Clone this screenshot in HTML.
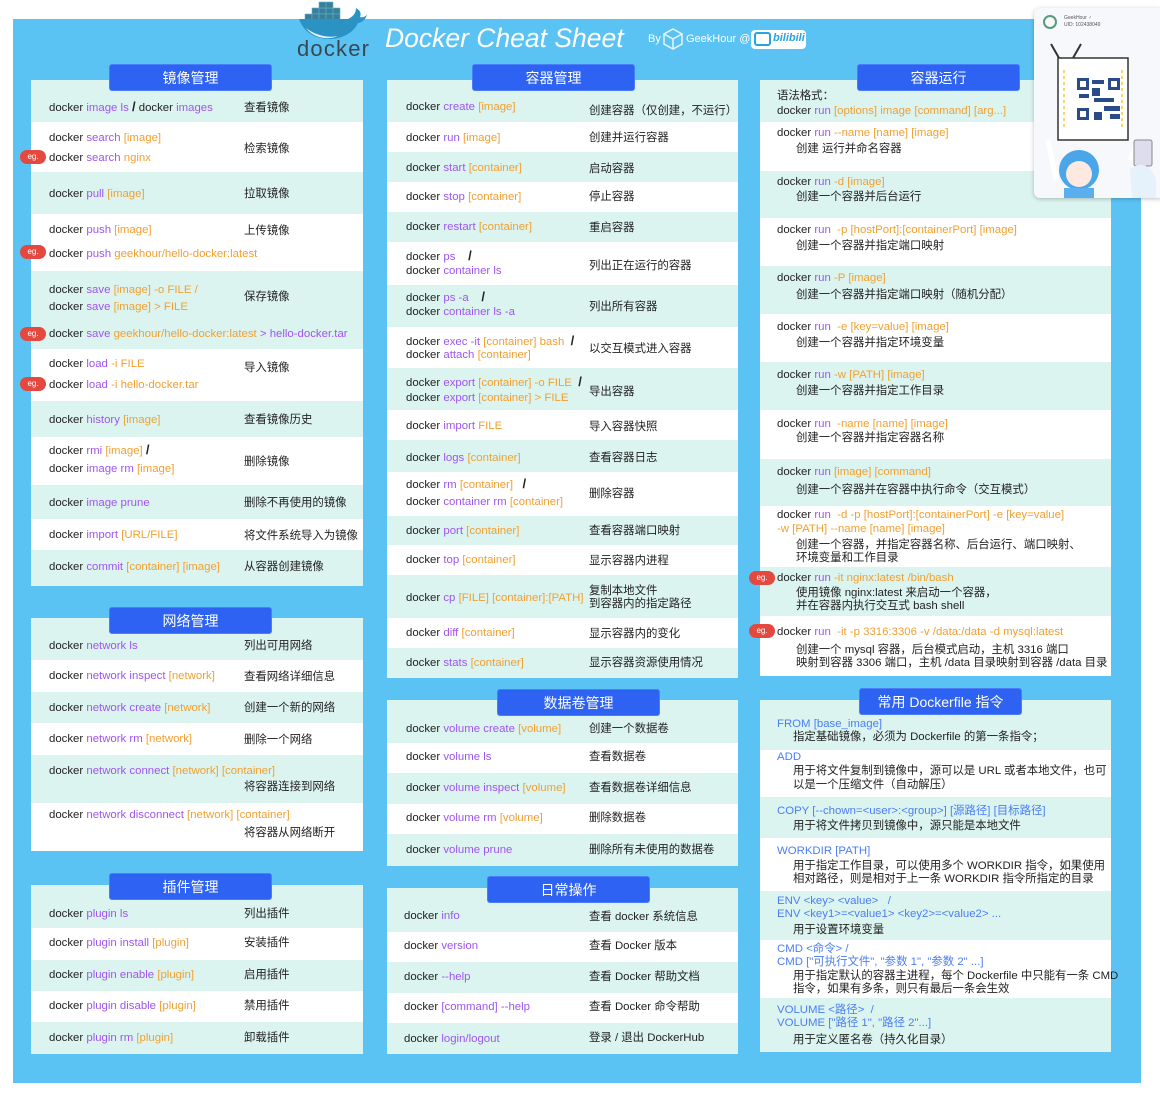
<!DOCTYPE html>
<html><head><meta charset="utf-8">
<style>
*{margin:0;padding:0;box-sizing:border-box}
body{width:1160px;height:1097px;background:#fff;position:relative;overflow:hidden;font-family:"Liberation Sans","Noto Sans CJK SC",sans-serif;color:#222}
.a{position:absolute}
#bg{left:13px;top:19px;width:1128px;height:1064px;background:#5bc3f4}
.r{position:absolute;background:#dcf4ef}
.w{background:#fff}
.t{position:absolute;font-size:11.4px;line-height:14px;white-space:nowrap;color:#222}
.p{color:#a054f0}.o{color:#f0a030}.b{color:#4a7ef5}
.pill{position:absolute;height:27px;background:#2d62f2;border-radius:3px;color:#fff;font-size:14px;line-height:27px;text-align:center;border:1px solid #4a7ef8}
.eg{position:absolute;width:26px;height:14px;background:#e4493f;color:#fff;border-radius:7px;font-size:8px;line-height:14px;text-align:center}
.sl{font-weight:bold;font-size:13px}
#card{z-index:5}
</style></head><body>
<div id="bg" class="a"></div>

<!-- header -->
<svg class="a" style="left:296px;top:0" width="76" height="60" viewBox="0 0 76 60">
<g fill="#3a7f9a" stroke="#5ab2cf" stroke-width=".6">
<rect x="16" y="8" width="7" height="6"/><rect x="23" y="8" width="7" height="6"/><rect x="30" y="8" width="7" height="6"/><rect x="37" y="8" width="7" height="6"/>
<rect x="23" y="2" width="7" height="6"/><rect x="30" y="2" width="7" height="6"/>
<rect x="9" y="14" width="7" height="6"/><rect x="16" y="14" width="7" height="6"/><rect x="23" y="14" width="7" height="6"/><rect x="30" y="14" width="7" height="6"/><rect x="37" y="14" width="7" height="6"/>
</g>
<path d="M3 19 H52 C56 17 60 14 60 8 C63 10 66 12 64 17 C68 18 70 16 71 14 C70 20 65 23 62 23 C57 34 44 39 34 39 C20 39 8 33 3 19Z" fill="#2b93c4"/>
<path d="M10 28 C20 36 34 38 42 36 C34 40 18 39 10 28Z" fill="#dff2fa"/>
<text x="1" y="56" font-family="Liberation Sans,sans-serif" font-size="22" fill="#39484f" textLength="72">docker</text>
</svg>
<div class="a" style="left:385px;top:21px;color:#fff;font-size:26.5px;font-style:italic;line-height:34px;white-space:nowrap">Docker Cheat Sheet</div>
<div class="a" style="left:648px;top:33px;color:#fff;font-size:11px">By</div>
<svg class="a" style="left:662px;top:28px" width="22" height="22" viewBox="0 0 22 22"><path d="M11 1 L20 6 V16 L11 21 L2 16 V6Z M2 6 L11 11 L20 6 M11 11 V21" fill="none" stroke="#e6f6ff" stroke-width="1.5"/></svg>
<div class="a" style="left:686px;top:33px;color:#fff;font-size:11px">GeekHour @</div>
<div class="a" style="left:751px;top:30px;width:55px;height:19px;background:#fff;border-radius:4px"></div>
<div class="a" style="left:754px;top:32px;width:17px;height:14px;border:2.5px solid #2aa4dd;border-radius:3px"></div>
<div class="a" style="left:773px;top:32px;font-size:11px;font-weight:bold;color:#2aa4dd;font-style:italic;width:32px;overflow:hidden">bilibili</div>

<!-- QR card -->
<div id="card" class="a" style="left:1034px;top:8px;width:130px;height:190px;background:#f7f8fb;border-radius:6px;box-shadow:0 1px 4px rgba(0,0,0,.25)">
<div class="a" style="left:9px;top:7px;width:14px;height:14px;border-radius:7px;border:2px solid #5a9a7a"></div>
<div class="a" style="left:30px;top:7px;font-size:5px;color:#555;line-height:7px">GeekHour ♂<br>UID: 102438049</div>
<svg class="a" style="left:0;top:32px" width="126" height="158" viewBox="0 0 126 158">
<path d="M17 4 L25 18 M47 4 L39 18" stroke="#333" stroke-width="2"/>
<rect x="24" y="18" width="70" height="82" fill="#fff" stroke="#333" stroke-width="1.5"/>
<g fill="#2b4a8a">
<rect x="43" y="38" width="12" height="12"/><rect x="74" y="38" width="12" height="12"/><rect x="43" y="68" width="12" height="12"/>
<rect x="58" y="40" width="12" height="4"/><rect x="58" y="48" width="8" height="8"/><rect x="60" y="58" width="20" height="4"/><rect x="45" y="54" width="10" height="4"/><rect x="70" y="66" width="16" height="5"/><rect x="60" y="72" width="8" height="8"/><rect x="76" y="74" width="10" height="5"/>
</g>
<g fill="#fff"><rect x="46" y="41" width="6" height="6"/><rect x="77" y="41" width="6" height="6"/><rect x="46" y="71" width="6" height="6"/></g>
<path d="M30 30 V88 M88 30 V88" stroke="#f2c84a" stroke-width="1.5" stroke-dasharray="3 3"/>
<path d="M14 100 L22 140 M104 100 L96 120" stroke="#fff" stroke-width="5"/>
<circle cx="45" cy="130" r="20" fill="#4aa6e8"/>
<circle cx="45" cy="134" r="13" fill="#fde9df"/>
<rect x="30" y="148" width="30" height="10" fill="#5ab0ee"/>
<rect x="100" y="100" width="18" height="26" rx="2" fill="#dde" stroke="#888"/>
<path d="M96 130 C106 120 118 125 122 140 L122 158 L98 158Z" fill="#e5f2fb"/>
</svg>
</div>

<!-- ======== 镜像管理 ======== -->
<div class="r" style="left:31px;top:80px;width:332px;height:42px"></div>
<div class="r w" style="left:31px;top:122px;width:332px;height:50px"></div>
<div class="r" style="left:31px;top:172px;width:332px;height:42px"></div>
<div class="r w" style="left:31px;top:214px;width:332px;height:57px"></div>
<div class="r" style="left:31px;top:271px;width:332px;height:78px"></div>
<div class="r w" style="left:31px;top:349px;width:332px;height:52px"></div>
<div class="r" style="left:31px;top:401px;width:332px;height:36px"></div>
<div class="r w" style="left:31px;top:437px;width:332px;height:48px"></div>
<div class="r" style="left:31px;top:485px;width:332px;height:34px"></div>
<div class="r w" style="left:31px;top:519px;width:332px;height:31px"></div>
<div class="r" style="left:31px;top:550px;width:332px;height:36px"></div>
<div class="pill" style="left:109px;top:64px;width:163px">镜像管理</div>
<div class="t" style="left:49px;top:100px">docker <span class="p">image ls</span> <span class="sl">/</span> docker <span class="p">images</span></div>
<div class="t" style="left:244px;top:101px">查看镜像</div>
<div class="t" style="left:49px;top:131px">docker <span class="p">search</span> <span class="o">[image]</span></div>
<div class="t" style="left:244px;top:142px">检索镜像</div>
<div class="eg" style="left:20px;top:150px">eg.</div>
<div class="t" style="left:49px;top:151px">docker <span class="p">search</span> <span class="o">nginx</span></div>
<div class="t" style="left:49px;top:187px">docker <span class="p">pull</span> <span class="o">[image]</span></div>
<div class="t" style="left:244px;top:187px">拉取镜像</div>
<div class="t" style="left:49px;top:223px">docker <span class="p">push</span> <span class="o">[image]</span></div>
<div class="t" style="left:244px;top:224px">上传镜像</div>
<div class="eg" style="left:20px;top:245px">eg.</div>
<div class="t" style="left:49px;top:247px">docker <span class="p">push</span> <span class="o">geekhour/hello-docker:latest</span></div>
<div class="t" style="left:49px;top:283px">docker <span class="p">save</span> <span class="o">[image] -o FILE /</span></div>
<div class="t" style="left:244px;top:290px">保存镜像</div>
<div class="t" style="left:49px;top:300px">docker <span class="p">save</span> <span class="o">[image] &gt; FILE</span></div>
<div class="eg" style="left:20px;top:327px">eg.</div>
<div class="t" style="left:49px;top:327px">docker <span class="p">save</span> <span class="o">geekhour/hello-docker:latest</span> <span class="p">&gt; hello-docker.tar</span></div>
<div class="t" style="left:49px;top:357px">docker <span class="p">load</span> <span class="o">-i FILE</span></div>
<div class="t" style="left:244px;top:361px">导入镜像</div>
<div class="eg" style="left:20px;top:377px">eg.</div>
<div class="t" style="left:49px;top:378px">docker <span class="p">load</span> <span class="o">-i hello-docker.tar</span></div>
<div class="t" style="left:49px;top:413px">docker <span class="p">history</span> <span class="o">[image]</span></div>
<div class="t" style="left:244px;top:413px">查看镜像历史</div>
<div class="t" style="left:49px;top:443px">docker <span class="p">rmi</span> <span class="o">[image]</span> <span class="sl">/</span></div>
<div class="t" style="left:244px;top:455px">删除镜像</div>
<div class="t" style="left:49px;top:462px">docker <span class="p">image rm</span> <span class="o">[image]</span></div>
<div class="t" style="left:49px;top:496px">docker <span class="p">image prune</span></div>
<div class="t" style="left:244px;top:496px">删除不再使用的镜像</div>
<div class="t" style="left:49px;top:528px">docker <span class="p">import</span> <span class="o">[URL/FILE]</span></div>
<div class="t" style="left:244px;top:529px">将文件系统导入为镜像</div>
<div class="t" style="left:49px;top:560px">docker <span class="p">commit</span> <span class="o">[container] [image]</span></div>
<div class="t" style="left:244px;top:560px">从容器创建镜像</div>

<!-- ======== 网络管理 ======== -->
<div class="r" style="left:31px;top:618px;width:332px;height:42px"></div>
<div class="r w" style="left:31px;top:660px;width:332px;height:32px"></div>
<div class="r" style="left:31px;top:692px;width:332px;height:31px"></div>
<div class="r w" style="left:31px;top:723px;width:332px;height:32px"></div>
<div class="r" style="left:31px;top:755px;width:332px;height:48px"></div>
<div class="r w" style="left:31px;top:803px;width:332px;height:48px"></div>
<div class="pill" style="left:109px;top:607px;width:163px">网络管理</div>
<div class="t" style="left:49px;top:639px">docker <span class="p">network ls</span></div>
<div class="t" style="left:244px;top:639px">列出可用网络</div>
<div class="t" style="left:49px;top:669px">docker <span class="p">network inspect</span> <span class="o">[network]</span></div>
<div class="t" style="left:244px;top:670px">查看网络详细信息</div>
<div class="t" style="left:49px;top:701px">docker <span class="p">network create</span> <span class="o">[network]</span></div>
<div class="t" style="left:244px;top:701px">创建一个新的网络</div>
<div class="t" style="left:49px;top:732px">docker <span class="p">network rm</span> <span class="o">[network]</span></div>
<div class="t" style="left:244px;top:733px">删除一个网络</div>
<div class="t" style="left:49px;top:764px">docker <span class="p">network connect</span> <span class="o">[network] [container]</span></div>
<div class="t" style="left:244px;top:780px">将容器连接到网络</div>
<div class="t" style="left:49px;top:808px">docker <span class="p">network disconnect</span> <span class="o">[network] [container]</span></div>
<div class="t" style="left:244px;top:826px">将容器从网络断开</div>

<!-- ======== 插件管理 ======== -->
<div class="r" style="left:31px;top:885px;width:332px;height:43px"></div>
<div class="r w" style="left:31px;top:928px;width:332px;height:32px"></div>
<div class="r" style="left:31px;top:960px;width:332px;height:31px"></div>
<div class="r w" style="left:31px;top:991px;width:332px;height:31px"></div>
<div class="r" style="left:31px;top:1022px;width:332px;height:32px"></div>
<div class="pill" style="left:109px;top:873px;width:163px">插件管理</div>
<div class="t" style="left:49px;top:907px">docker <span class="p">plugin ls</span></div>
<div class="t" style="left:244px;top:907px">列出插件</div>
<div class="t" style="left:49px;top:936px">docker <span class="p">plugin install</span> <span class="o">[plugin]</span></div>
<div class="t" style="left:244px;top:936px">安装插件</div>
<div class="t" style="left:49px;top:968px">docker <span class="p">plugin enable</span> <span class="o">[plugin]</span></div>
<div class="t" style="left:244px;top:968px">启用插件</div>
<div class="t" style="left:49px;top:999px">docker <span class="p">plugin disable</span> <span class="o">[plugin]</span></div>
<div class="t" style="left:244px;top:999px">禁用插件</div>
<div class="t" style="left:49px;top:1031px">docker <span class="p">plugin rm</span> <span class="o">[plugin]</span></div>
<div class="t" style="left:244px;top:1031px">卸载插件</div>

<!-- ======== 容器管理 ======== -->
<div class="r" style="left:387px;top:80px;width:351px;height:42px"></div>
<div class="r w" style="left:387px;top:122px;width:351px;height:30px"></div>
<div class="r" style="left:387px;top:152px;width:351px;height:30px"></div>
<div class="r w" style="left:387px;top:182px;width:351px;height:30px"></div>
<div class="r" style="left:387px;top:212px;width:351px;height:30px"></div>
<div class="r w" style="left:387px;top:242px;width:351px;height:43px"></div>
<div class="r" style="left:387px;top:285px;width:351px;height:42px"></div>
<div class="r w" style="left:387px;top:327px;width:351px;height:41px"></div>
<div class="r" style="left:387px;top:368px;width:351px;height:42px"></div>
<div class="r w" style="left:387px;top:410px;width:351px;height:30px"></div>
<div class="r" style="left:387px;top:440px;width:351px;height:32px"></div>
<div class="r w" style="left:387px;top:472px;width:351px;height:44px"></div>
<div class="r" style="left:387px;top:516px;width:351px;height:29px"></div>
<div class="r w" style="left:387px;top:545px;width:351px;height:30px"></div>
<div class="r" style="left:387px;top:575px;width:351px;height:43px"></div>
<div class="r w" style="left:387px;top:618px;width:351px;height:30px"></div>
<div class="r" style="left:387px;top:648px;width:351px;height:30px"></div>
<div class="pill" style="left:472px;top:64px;width:163px">容器管理</div>
<div class="t" style="left:406px;top:100px">docker <span class="p">create</span> <span class="o">[image]</span></div>
<div class="t" style="left:589px;top:104px">创建容器（仅创建，不运行）</div>
<div class="t" style="left:406px;top:131px">docker <span class="p">run</span> <span class="o">[image]</span></div>
<div class="t" style="left:589px;top:131px">创建并运行容器</div>
<div class="t" style="left:406px;top:161px">docker <span class="p">start</span> <span class="o">[container]</span></div>
<div class="t" style="left:589px;top:162px">启动容器</div>
<div class="t" style="left:406px;top:190px">docker <span class="p">stop</span> <span class="o">[container]</span></div>
<div class="t" style="left:589px;top:190px">停止容器</div>
<div class="t" style="left:406px;top:220px">docker <span class="p">restart</span> <span class="o">[container]</span></div>
<div class="t" style="left:589px;top:221px">重启容器</div>
<div class="t" style="left:406px;top:249px">docker <span class="p">ps</span> &nbsp;&nbsp;&nbsp;<span class="sl">/</span></div>
<div class="t" style="left:589px;top:259px">列出正在运行的容器</div>
<div class="t" style="left:406px;top:264px">docker <span class="p">container ls</span></div>
<div class="t" style="left:406px;top:290px">docker <span class="p">ps -a</span> &nbsp;&nbsp;&nbsp;<span class="sl">/</span></div>
<div class="t" style="left:589px;top:300px">列出所有容器</div>
<div class="t" style="left:406px;top:305px">docker <span class="p">container ls -a</span></div>
<div class="t" style="left:406px;top:334px">docker <span class="p">exec -it</span> <span class="o">[container] bash</span> &nbsp;<span class="sl">/</span></div>
<div class="t" style="left:589px;top:342px">以交互模式进入容器</div>
<div class="t" style="left:406px;top:348px">docker <span class="p">attach</span> <span class="o">[container]</span></div>
<div class="t" style="left:406px;top:375px">docker <span class="p">export</span> <span class="o">[container] -o FILE</span> &nbsp;<span class="sl">/</span></div>
<div class="t" style="left:589px;top:385px">导出容器</div>
<div class="t" style="left:406px;top:391px">docker <span class="p">export</span> <span class="o">[container] &gt; FILE</span></div>
<div class="t" style="left:406px;top:419px">docker <span class="p">import</span> <span class="o">FILE</span></div>
<div class="t" style="left:589px;top:420px">导入容器快照</div>
<div class="t" style="left:406px;top:451px">docker <span class="p">logs</span> <span class="o">[container]</span></div>
<div class="t" style="left:589px;top:451px">查看容器日志</div>
<div class="t" style="left:406px;top:477px">docker <span class="p">rm</span> <span class="o">[container]</span> &nbsp;&nbsp;<span class="sl">/</span></div>
<div class="t" style="left:589px;top:487px">删除容器</div>
<div class="t" style="left:406px;top:495px">docker <span class="p">container rm</span> <span class="o">[container]</span></div>
<div class="t" style="left:406px;top:524px">docker <span class="p">port</span> <span class="o">[container]</span></div>
<div class="t" style="left:589px;top:524px">查看容器端口映射</div>
<div class="t" style="left:406px;top:553px">docker <span class="p">top</span> <span class="o">[container]</span></div>
<div class="t" style="left:589px;top:554px">显示容器内进程</div>
<div class="t" style="left:406px;top:591px">docker <span class="p">cp</span> <span class="o">[FILE] [container]:[PATH]</span></div>
<div class="t" style="left:589px;top:584px">复制本地文件</div>
<div class="t" style="left:589px;top:597px">到容器内的指定路径</div>
<div class="t" style="left:406px;top:626px">docker <span class="p">diff</span> <span class="o">[container]</span></div>
<div class="t" style="left:589px;top:627px">显示容器内的变化</div>
<div class="t" style="left:406px;top:656px">docker <span class="p">stats</span> <span class="o">[container]</span></div>
<div class="t" style="left:589px;top:656px">显示容器资源使用情况</div>

<!-- ======== 数据卷管理 ======== -->
<div class="r" style="left:387px;top:700px;width:351px;height:43px"></div>
<div class="r w" style="left:387px;top:743px;width:351px;height:30px"></div>
<div class="r" style="left:387px;top:773px;width:351px;height:31px"></div>
<div class="r w" style="left:387px;top:804px;width:351px;height:30px"></div>
<div class="r" style="left:387px;top:834px;width:351px;height:32px"></div>
<div class="pill" style="left:497px;top:689px;width:163px">数据卷管理</div>
<div class="t" style="left:406px;top:722px">docker <span class="p">volume create</span> <span class="o">[volume]</span></div>
<div class="t" style="left:589px;top:722px">创建一个数据卷</div>
<div class="t" style="left:406px;top:750px">docker <span class="p">volume ls</span></div>
<div class="t" style="left:589px;top:750px">查看数据卷</div>
<div class="t" style="left:406px;top:781px">docker <span class="p">volume inspect</span> <span class="o">[volume]</span></div>
<div class="t" style="left:589px;top:781px">查看数据卷详细信息</div>
<div class="t" style="left:406px;top:811px">docker <span class="p">volume rm</span> <span class="o">[volume]</span></div>
<div class="t" style="left:589px;top:811px">删除数据卷</div>
<div class="t" style="left:406px;top:843px">docker <span class="p">volume prune</span></div>
<div class="t" style="left:589px;top:843px">删除所有未使用的数据卷</div>

<!-- ======== 日常操作 ======== -->
<div class="r" style="left:387px;top:888px;width:351px;height:44px"></div>
<div class="r w" style="left:387px;top:932px;width:351px;height:30px"></div>
<div class="r" style="left:387px;top:962px;width:351px;height:31px"></div>
<div class="r w" style="left:387px;top:993px;width:351px;height:30px"></div>
<div class="r" style="left:387px;top:1023px;width:351px;height:31px"></div>
<div class="pill" style="left:487px;top:876px;width:163px">日常操作</div>
<div class="t" style="left:404px;top:909px">docker <span class="p">info</span></div>
<div class="t" style="left:589px;top:910px">查看 docker 系统信息</div>
<div class="t" style="left:404px;top:939px">docker <span class="p">version</span></div>
<div class="t" style="left:589px;top:939px">查看 Docker 版本</div>
<div class="t" style="left:404px;top:970px">docker <span class="p">--help</span></div>
<div class="t" style="left:589px;top:970px">查看 Docker 帮助文档</div>
<div class="t" style="left:404px;top:1000px">docker <span class="p">[command] --help</span></div>
<div class="t" style="left:589px;top:1000px">查看 Docker 命令帮助</div>
<div class="t" style="left:404px;top:1032px">docker <span class="p">login/logout</span></div>
<div class="t" style="left:589px;top:1031px">登录 / 退出 DockerHub</div>

<!-- ======== 容器运行 ======== -->
<div class="r" style="left:760px;top:80px;width:351px;height:42px"></div>
<div class="r w" style="left:760px;top:122px;width:351px;height:49px"></div>
<div class="r" style="left:760px;top:171px;width:351px;height:47px"></div>
<div class="r w" style="left:760px;top:218px;width:351px;height:48px"></div>
<div class="r" style="left:760px;top:266px;width:351px;height:48px"></div>
<div class="r w" style="left:760px;top:314px;width:351px;height:48px"></div>
<div class="r" style="left:760px;top:362px;width:351px;height:48px"></div>
<div class="r w" style="left:760px;top:410px;width:351px;height:49px"></div>
<div class="r" style="left:760px;top:459px;width:351px;height:47px"></div>
<div class="r w" style="left:760px;top:506px;width:351px;height:61px"></div>
<div class="r" style="left:760px;top:567px;width:351px;height:49px"></div>
<div class="r w" style="left:760px;top:616px;width:351px;height:60px"></div>
<div class="pill" style="left:857px;top:64px;width:163px">容器运行</div>
<div class="t" style="left:777px;top:89px">语法格式：</div>
<div class="t" style="left:777px;top:104px">docker <span class="p">run</span> <span class="o">[options]</span> <span class="o">image [command] [arg...]</span></div>
<div class="t" style="left:777px;top:126px">docker <span class="p">run</span> <span class="o">--name [name] [image]</span></div>
<div class="t" style="left:796px;top:142px">创建 运行并命名容器</div>
<div class="t" style="left:777px;top:175px">docker <span class="p">run</span> <span class="o">-d [image]</span></div>
<div class="t" style="left:796px;top:190px">创建一个容器并后台运行</div>
<div class="t" style="left:777px;top:223px">docker <span class="p">run</span> &nbsp;<span class="o">-p [hostPort]:[containerPort] [image]</span></div>
<div class="t" style="left:796px;top:239px">创建一个容器并指定端口映射</div>
<div class="t" style="left:777px;top:271px">docker <span class="p">run</span> <span class="o">-P [image]</span></div>
<div class="t" style="left:796px;top:288px">创建一个容器并指定端口映射（随机分配）</div>
<div class="t" style="left:777px;top:320px">docker <span class="p">run</span> &nbsp;<span class="o">-e [key=value] [image]</span></div>
<div class="t" style="left:796px;top:336px">创建一个容器并指定环境变量</div>
<div class="t" style="left:777px;top:368px">docker <span class="p">run</span> <span class="o">-w [PATH] [image]</span></div>
<div class="t" style="left:796px;top:384px">创建一个容器并指定工作目录</div>
<div class="t" style="left:777px;top:417px">docker <span class="p">run</span> &nbsp;<span class="o">-name [name] [image]</span></div>
<div class="t" style="left:796px;top:431px">创建一个容器并指定容器名称</div>
<div class="t" style="left:777px;top:465px">docker <span class="p">run</span> <span class="o">[image] [command]</span></div>
<div class="t" style="left:796px;top:483px">创建一个容器并在容器中执行命令（交互模式）</div>
<div class="t" style="left:777px;top:508px">docker <span class="p">run</span> &nbsp;<span class="o">-d -p [hostPort]:[containerPort] -e [key=value]</span></div>
<div class="t" style="left:777px;top:522px"><span class="o">-w [PATH] --name [name] [image]</span></div>
<div class="t" style="left:796px;top:538px">创建一个容器，并指定容器名称、后台运行、端口映射、</div>
<div class="t" style="left:796px;top:551px">环境变量和工作目录</div>
<div class="eg" style="left:749px;top:571px">eg.</div>
<div class="t" style="left:777px;top:571px">docker <span class="p">run</span> <span class="o">-it nginx:latest /bin/bash</span></div>
<div class="t" style="left:796px;top:586px">使用镜像 nginx:latest 来启动一个容器，</div>
<div class="t" style="left:796px;top:599px">并在容器内执行交互式 bash shell</div>
<div class="eg" style="left:749px;top:624px">eg.</div>
<div class="t" style="left:777px;top:625px">docker <span class="p">run</span> &nbsp;<span class="o">-it -p 3316:3306 -v /data:/data -d mysql:latest</span></div>
<div class="t" style="left:796px;top:643px">创建一个 mysql 容器，后台模式启动，主机 3316 端口</div>
<div class="t" style="left:796px;top:656px">映射到容器 3306 端口，主机 /data 目录映射到容器 /data 目录</div>

<!-- ======== Dockerfile ======== -->
<div class="r" style="left:760px;top:700px;width:351px;height:50px"></div>
<div class="r w" style="left:760px;top:750px;width:351px;height:47px"></div>
<div class="r" style="left:760px;top:797px;width:351px;height:41px"></div>
<div class="r w" style="left:760px;top:838px;width:351px;height:53px"></div>
<div class="r" style="left:760px;top:891px;width:351px;height:49px"></div>
<div class="r w" style="left:760px;top:940px;width:351px;height:58px"></div>
<div class="r" style="left:760px;top:998px;width:351px;height:54px"></div>
<div class="pill" style="left:859px;top:688px;width:163px">常用 Dockerfile 指令</div>
<div class="t b" style="left:777px;top:717px">FROM [base_image]</div>
<div class="t" style="left:793px;top:730px">指定基础镜像，必须为 Dockerfile 的第一条指令；</div>
<div class="t b" style="left:777px;top:750px">ADD</div>
<div class="t" style="left:793px;top:764px">用于将文件复制到镜像中，源可以是 URL 或者本地文件，也可</div>
<div class="t" style="left:793px;top:778px">以是一个压缩文件（自动解压）</div>
<div class="t b" style="left:777px;top:804px">COPY [--chown=&lt;user&gt;:&lt;group&gt;] [源路径] [目标路径]</div>
<div class="t" style="left:793px;top:819px">用于将文件拷贝到镜像中，源只能是本地文件</div>
<div class="t b" style="left:777px;top:844px">WORKDIR [PATH]</div>
<div class="t" style="left:793px;top:859px">用于指定工作目录，可以使用多个 WORKDIR 指令，如果使用</div>
<div class="t" style="left:793px;top:872px">相对路径，则是相对于上一条 WORKDIR 指令所指定的目录</div>
<div class="t b" style="left:777px;top:894px">ENV &lt;key&gt; &lt;value&gt; &nbsp;&nbsp;/</div>
<div class="t b" style="left:777px;top:907px">ENV &lt;key1&gt;=&lt;value1&gt; &lt;key2&gt;=&lt;value2&gt; ...</div>
<div class="t" style="left:793px;top:923px">用于设置环境变量</div>
<div class="t b" style="left:777px;top:942px">CMD &lt;命令&gt; /</div>
<div class="t b" style="left:777px;top:955px">CMD ["可执行文件", "参数 1", "参数 2" ...]</div>
<div class="t" style="left:793px;top:969px">用于指定默认的容器主进程，每个 Dockerfile 中只能有一条 CMD</div>
<div class="t" style="left:793px;top:982px">指令，如果有多条，则只有最后一条会生效</div>
<div class="t b" style="left:777px;top:1003px">VOLUME &lt;路径&gt; &nbsp;/</div>
<div class="t b" style="left:777px;top:1016px">VOLUME ["路径 1", "路径 2"...]</div>
<div class="t" style="left:793px;top:1033px">用于定义匿名卷（持久化目录）</div>
</body></html>
